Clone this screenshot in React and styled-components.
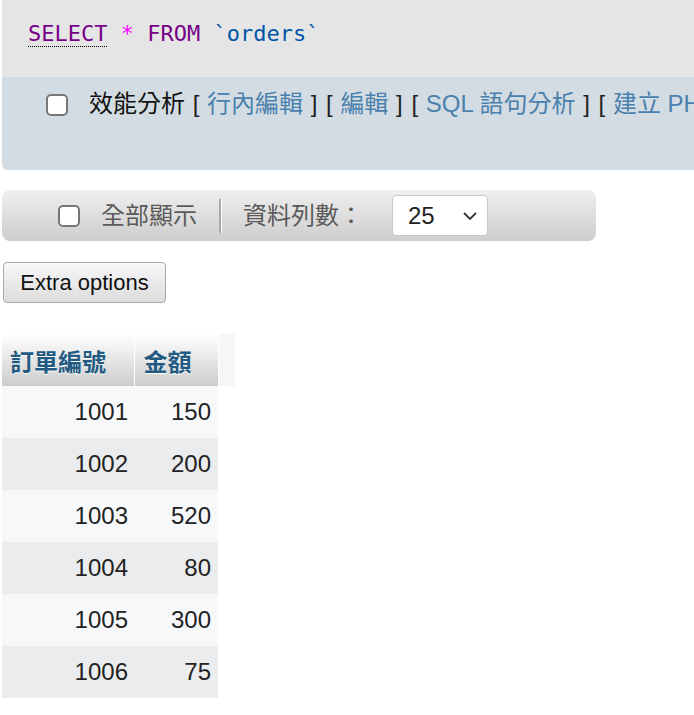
import React from 'react'
import styled, { createGlobalStyle } from 'styled-components'

const GlobalStyle = createGlobalStyle`
  body {
    margin: 0;
    background: #fff;
    font-family: "Liberation Sans", "Noto Sans CJK TC", Arial, sans-serif;
    font-size: 24px;
    color: #222;
  }
`

const rows = [
  { id: 1001, amount: 150 },
  { id: 1002, amount: 200 },
  { id: 1003, amount: 520 },
  { id: 1004, amount: 80 },
  { id: 1005, amount: 300 },
  { id: 1006, amount: 75 },
]

function Checkbox() {
  return <Box />
}

export default function App() {
  return (
    <Page>
      <GlobalStyle />
      <QueryPanel>
        <SqlBox>
          <Keyword $doc>SELECT</Keyword> <Star>*</Star> <Keyword>FROM</Keyword>{' '}
          <Ident>`orders`</Ident>
        </SqlBox>
        <ActionBar>
          <Checkbox />
          <ActionText>
            效能分析 <Bracket>[</Bracket> <Link>行內編輯</Link> <Bracket>]</Bracket>{' '}
            <Bracket>[</Bracket> <Link>編輯</Link> <Bracket>]</Bracket>{' '}
            <Bracket>[</Bracket> <Link>SQL 語句分析</Link> <Bracket>]</Bracket>{' '}
            <Bracket>[</Bracket> <Link>建立 PHP 程式碼</Link> <Bracket>]</Bracket>
          </ActionText>
        </ActionBar>
      </QueryPanel>

      <NavBar>
        <Checkbox />
        <NavLabel>全部顯示</NavLabel>
        <Separator />
        <NavLabel>資料列數：</NavLabel>
        <Select>
          <span>25</span>
          <svg width="16" height="10" viewBox="0 0 16 10">
            <path d="M2 2 L8 8 L14 2" fill="none" stroke="#333" strokeWidth="1.8" />
          </svg>
        </Select>
      </NavBar>

      <Button>Extra options</Button>

      <Table>
        <thead>
          <tr>
            <Th $w={132}>訂單編號</Th>
            <Th $w={84} $pad={9}>金額</Th>
            <Th $w={15} $blank />
          </tr>
        </thead>
        <tbody>
          {rows.map((r, i) => (
            <Row key={r.id} $even={i % 2 === 1}>
              <Td>{r.id}</Td>
              <Td $pad={7}>{r.amount}</Td>
              <EmptyTd />
            </Row>
          ))}
        </tbody>
      </Table>
    </Page>
  )
}

const Page = styled.div`
  padding: 0 0 0 2px;
  overflow: hidden;
`

const QueryPanel = styled.div`
  width: 760px;
  border-bottom-left-radius: 6px;
  overflow: hidden;
`

const SqlBox = styled.div`
  background: #e5e5e5;
  height: 77px;
  box-sizing: border-box;
  padding: 20px 0 0 26px;
  font-family: "DejaVu Sans Mono", "Liberation Mono", monospace;
  font-size: 22px;
  line-height: 28px;
  white-space: pre;
`

const Keyword = styled.span`
  color: #770088;
  ${(p) => (p.$doc ? 'border-bottom: 1px dotted #000;' : '')}
`

const Star = styled.span`
  color: #ff00ff;
`

const Ident = styled.span`
  color: #0055aa;
`

const ActionBar = styled.div`
  background: #d3dce3;
  height: 93px;
  box-sizing: border-box;
  padding: 12px 0 0 44px;
  display: flex;
  align-items: flex-start;
  gap: 21px;
  & > div:first-child {
    margin-top: 5px;
  }
`

const ActionText = styled.div`
  line-height: 30px;
  white-space: nowrap;
  color: #111;
`

const Bracket = styled.span`
  color: #222;
  margin: 0 1px;
`

const Link = styled.span`
  color: #4a80ad;
`

const Box = styled.div`
  flex: none;
  width: 22px;
  height: 22px;
  box-sizing: border-box;
  border: 2px solid #777;
  border-radius: 5px;
  background: #fff;
`

const NavBar = styled.div`
  margin-top: 20px;
  width: 594px;
  height: 51px;
  box-sizing: border-box;
  border-radius: 8px;
  background: linear-gradient(#efefef, #cdcdcd);
  display: flex;
  align-items: center;
  padding-left: 56px;
`

const NavLabel = styled.span`
  color: #5a5a5a;
  margin-left: 21px;
  line-height: 30px;
`

const Separator = styled.div`
  width: 2px;
  height: 34px;
  margin-left: 22px;
  background: #a9a9a9;
  border-right: 1px solid #fff;
  align-self: center;
`

const Select = styled.div`
  margin-left: 29px;
  width: 96px;
  height: 41px;
  box-sizing: border-box;
  background: #fff;
  border: 1px solid #c8c8c8;
  border-radius: 4px;
  display: flex;
  align-items: center;
  justify-content: space-between;
  padding: 0 9px 0 15px;
  color: #222;
`

const Button = styled.button`
  display: block;
  margin: 21px 0 0 1px;
  width: 163px;
  height: 41px;
  border: 1px solid #aaa;
  border-radius: 4px;
  background: linear-gradient(#f8f8f8, #dcdcdc);
  font-family: "Liberation Sans", Arial, sans-serif;
  font-size: 22px;
  color: #111;
  padding: 0;
`

const Table = styled.table`
  margin-top: 31px;
  border-collapse: collapse;
  border-spacing: 0;
`

const Th = styled.th`
  width: ${(p) => p.$w}px;
  height: 52px;
  box-sizing: border-box;
  padding: 0 ${(p) => p.$pad || 8}px;
  text-align: left;
  font-weight: bold;
  color: #235a81;
  text-shadow: 0 1px 0 #fff;
  background: ${(p) => (p.$blank ? '#f5f6f8' : 'linear-gradient(#ffffff, #cccccc)')};
  border-right: ${(p) => (p.$blank ? 'none' : '1px solid #fff')};
`

const Row = styled.tr`
  background: ${(p) => (p.$even ? '#ebecee' : '#f7f8fa')};
`

const Td = styled.td`
  height: 52px;
  padding: 0 ${(p) => p.$pad || 6}px 0 0;
  text-align: right;
  color: #222;
`

const EmptyTd = styled.td`
  background: #fff;
`
